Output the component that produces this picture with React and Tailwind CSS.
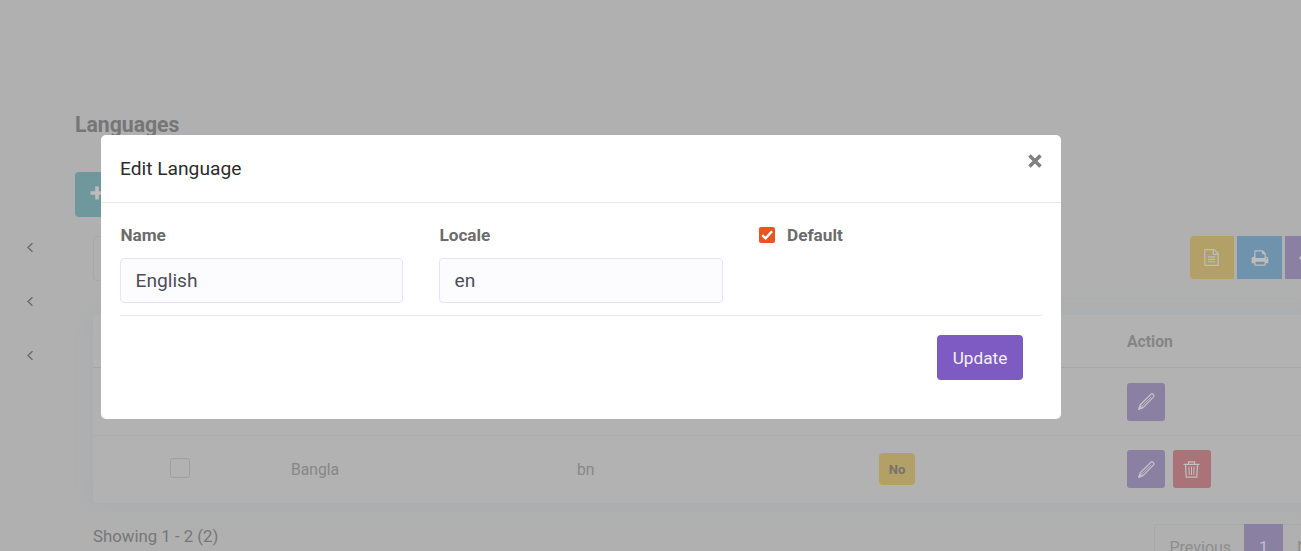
const FileIcon = () => (
  <svg viewBox="0 0 1792 1792" className="-ml-px size-[17px]" fill="currentColor">
    <path d="M1596 380q28 28 48 76t20 88v1152q0 40-28 68t-68 28h-1344q-40 0-68-28t-28-68v-1600q0-40 28-68t68-28h896q40 0 88 20t76 48zm-444-244v376h376q-10-29-22-41l-313-313q-12-12-41-22zm384 1528v-1024h-416q-40 0-68-28t-28-68v-416h-768v1536h1280zm-1024-864q0-14 9-23t23-9h704q14 0 23 9t9 23v64q0 14-9 23t-23 9h-704q-14 0-23-9t-9-23v-64zm736 224q14 0 23 9t9 23v64q0 14-9 23t-23 9h-704q-14 0-23-9t-9-23v-64q0-14 9-23t23-9h704zm0 256q14 0 23 9t9 23v64q0 14-9 23t-23 9h-704q-14 0-23-9t-9-23v-64q0-14 9-23t23-9h704z" />
  </svg>
);

const PrintIcon = () => (
  <svg viewBox="0 0 1792 1792" className="size-[18px]" fill="currentColor">
    <path d="M448 1536h896v-256h-896v256zm0-640h896v-384h-160q-40 0-68-28t-28-68v-160h-640v640zm1152 64q0-26-19-45t-45-19-45 19-19 45 19 45 45 19 45-19 19-45zm128 0v416q0 13-9.5 22.5t-22.5 9.5h-224v160q0 40-28 68t-68 28h-960q-40 0-68-28t-28-68v-160h-224q-13 0-22.5-9.5t-9.5-22.5v-416q0-79 56.5-135.5t135.5-56.5h64v-544q0-40 28-68t68-28h672q40 0 88 20t76 48l152 152q28 28 48 76t20 88v256h64q79 0 135.5 56.5t56.5 135.5z" />
  </svg>
);

const Chevron = () => (
  <svg viewBox="0 0 8 10" className="h-[10px] w-2" fill="none" stroke="#6c6c6c" strokeWidth="1.4">
    <path d="M6.5 .2 2 4.5 6.5 8.8" />
  </svg>
);

const PencilIcon = () => (
  <svg viewBox="0 0 17 17" className="size-[17px]" fill="none" stroke="currentColor" strokeWidth="1.3" strokeLinejoin="round">
    <path d="M.8 16.2 2.3 11.7 12.9 1.2q1.2-.9 2.4.2t.3 2.5L5.1 14.6Z" />
    <path d="M4.3 12.8 13.3 3.8M2.3 11.8l2.8 2.8" strokeWidth=".9" />
    <path d="M.8 16.2l1-2.8 1.7 1.8Z" fill="currentColor" />
  </svg>
);

const TrashIcon = () => (
  <svg viewBox="0 0 17 17" className="-ml-px size-[17px]" fill="none" stroke="currentColor" strokeWidth="1.2">
    <path d="M.5 3.3h16M5.5 3V.8h6V3M2.5 3.5l.7 12.7h10.6l.7-12.7" />
    <path d="M6 5.5l.2 8.5M8.5 5.5V14M11 5.5l-.2 8.5" strokeWidth="1" />
  </svg>
);

const EditButton = () => (
  <button className="flex size-[38px] items-center justify-center rounded-[3px] bg-[#8a80a2] text-[#c2c0c4]">
    <PencilIcon />
  </button>
);

function Page() {
  return (
    <div className="flex h-full">
      <aside className="flex w-[75px] shrink-0 flex-col gap-11 pt-[243px] pl-[26px]">
        <Chevron />
        <Chevron />
        <Chevron />
      </aside>
      <main className="w-[1240px] shrink-0 pt-[110px]">
        <h1 className="h-[62px] text-[21.2px] leading-[30px] font-bold text-[#767676]">Languages</h1>
        <button className="flex h-[45px] w-[120px] rounded-[4px] bg-[#6f989d] pt-[14px] pl-[15px]">
          <svg viewBox="0 0 14 14" className="size-[14px]" stroke="#bcbcbc" strokeWidth="3.6">
            <path d="M7 .5v13M.5 7h13" />
          </svg>
        </button>
        <div className="flex h-[98px] justify-between pt-[19px] pl-[18px]">
          <div className="h-[45px] w-[200px] rounded-[4px] border border-[#a8a8ae]" />
          <div className="flex h-[43px] w-[125px] gap-[3px] text-[#bebdbb]">
            <button className="flex w-11 shrink-0 items-center justify-center rounded-l-[4px] bg-[#b3a066]"><FileIcon /></button>
            <button className="flex w-[45px] shrink-0 items-center justify-center bg-[#7093ad]"><PrintIcon /></button>
            <button className="flex w-[45px] shrink-0 items-center bg-[#8a80a2] pl-[14px]">
              <svg viewBox="0 0 16 12" className="h-3 w-4" fill="none" stroke="currentColor" strokeWidth="1.5">
                <path d="M1 6q7-9 14 0q-7 9-14 0z" />
                <circle cx="8" cy="6" r="2" />
              </svg>
            </button>
          </div>
        </div>
        <section className="ml-[18px] h-[188px] rounded-[4px] bg-[#b2b2b2] text-[15.7px] text-[#878787] shadow-[0_0_20px_4px_#abadb0]">
          <div className="flex h-[53px] items-center border-b border-[#a6a6a7] pt-0.5 pl-[1034px] font-bold text-[#858585]">Action</div>
          <div className="flex h-[68px] items-center border-b border-[#adadad] pl-[1034px]"><EditButton /></div>
          <div className="grid h-[66px] grid-cols-[77px_121px_286px_302px_248px_auto] items-center">
            <span />
            <span className="-mt-0.5 size-5 rounded-[3px] border border-[#a0a0a0]" />
            <span className="pt-px">Bangla</span>
            <span className="pt-px">bn</span>
            <span className="flex h-8 w-9 items-center justify-center rounded-[4px] bg-[#b3a066] pt-px text-[13px] font-bold text-[#77746c]">No</span>
            <span className="flex gap-2">
              <EditButton />
              <button className="flex size-[38px] items-center justify-center rounded-[3px] bg-[#a97378] text-[#c4bfc0]"><TrashIcon /></button>
            </span>
          </div>
        </section>
        <footer className="flex justify-between pt-[21px] pl-[18px]">
          <p className="text-[16.8px] leading-6 text-[#777]">Showing 1 - 2 (2)</p>
          <nav className="flex h-[45px] w-[161px] rounded-l-[4px] border border-r-0 border-[#a9a9ac] text-base leading-[45px] text-[#8e8e8e]">
            <span className="w-[89px] shrink-0 pl-[14.5px]">Previous</span>
            <span className="-mt-px w-[39px] shrink-0 bg-[#8a80a2] pt-px text-center text-[#c0bfc2]">1</span>
            <span className="shrink-0 pl-[14px]">Next</span>
          </nav>
        </footer>
      </main>
    </div>
  );
}

function Field({ label, value }) {
  return (
    <label className="flex flex-col">
      <span className="pl-[.4px] text-[17.2px] leading-6 font-bold text-[#6c6c6c]">{label}</span>
      <input defaultValue={value} className="mt-[11px] h-[45px] rounded-[4px] border border-[#e3e3fc] bg-[#fcfcff] px-[14.5px] text-[19.2px] text-[#495057] outline-none" />
    </label>
  );
}

function EditDialog() {
  return (
    <div role="dialog" className="h-[284px] w-[960px] rounded-[5px] bg-white">
      <header className="flex h-[68px] justify-between border-b border-[#e6e8ea] pr-[19px] pl-[19px]">
        <h2 className="pt-5 text-[19.2px] leading-7 text-[#2c2c2c]">Edit Language</h2>
        <button aria-label="Close" className="flex h-[52px] items-center">
          <svg viewBox="0 0 14 14" className="size-[14px]" stroke="#808080" strokeWidth="3.6">
            <path d="M1.5 1.5l11 11m0-11l-11 11" />
          </svg>
        </button>
      </header>
      <div className="mx-[19px] grid h-[113px] grid-cols-[283px_284px_auto] gap-9 border-b border-[#e6e8ea] pt-5">
        <Field label="Name" value="English" />
        <Field label="Locale" value="en" />
        <label className="flex h-6 items-center gap-3 text-[17.2px] leading-6 font-bold text-[#6c6c6c]">
          <svg viewBox="0 0 16 16" className="size-4">
            <rect width="16" height="16" rx="2" fill="#e95420" />
            <path d="M3.2 8.2 6.6 11.4 13 4.2" fill="none" stroke="white" strokeWidth="2.4" />
          </svg>
          Default
        </label>
      </div>
      <footer className="flex justify-end pt-[19px] pr-[38px]">
        <button className="h-[45px] w-[86px] rounded-[4px] bg-[#7e5bc2] pt-0.5 text-[17.2px] text-[#f3effa]">Update</button>
      </footer>
    </div>
  );
}

export default function App() {
  return (
    <div className="relative h-[551px] w-full overflow-hidden bg-[#b0b0b0] font-[Roboto,sans-serif]">
      <Page />
      <div className="absolute inset-0 pt-[135px] pl-[101px]">
        <EditDialog />
      </div>
    </div>
  );
}
